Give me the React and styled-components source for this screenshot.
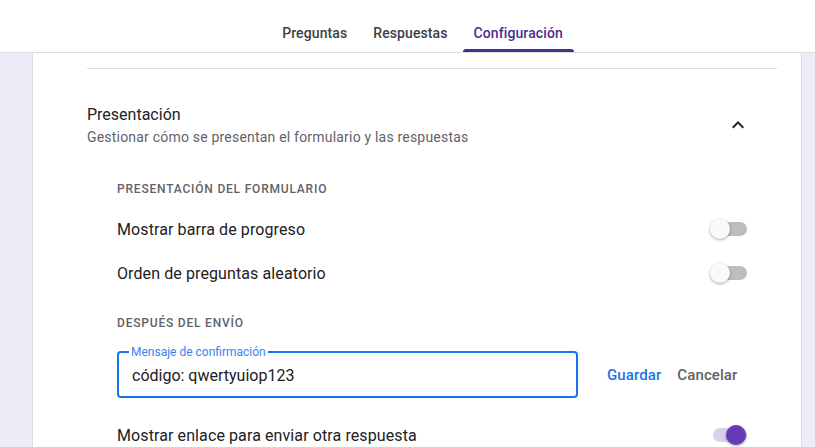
import React from "react";
import styled, { createGlobalStyle } from "styled-components";

const GlobalStyle = createGlobalStyle`
  html, body {
    margin: 0;
    padding: 0;
    background: #f0ebf8;
    font-family: Roboto, "Liberation Sans", Arial, sans-serif;
    color: #202124;
    overflow: hidden;
  }
`

const Header = styled.header`
  height: 52px;
  background: #fff;
  border-bottom: 1px solid #dadce0;
  display: flex;
  justify-content: center;
  align-items: flex-end;
  padding-left: 30px;
  box-sizing: content-box;
`

const Tabs = styled.nav`
  display: flex;
  gap: 4px;
`

const Tab = styled.div`
  position: relative;
  height: 52px;
  box-sizing: border-box;
  padding: 0 11px 9px;
  display: flex;
  align-items: flex-end;
  font-size: 14px;
  line-height: 20px;
  font-weight: 500;
  letter-spacing: 0.1px;
  color: ${p => (p.$active ? "#4b2c8f" : "#3c4043")};
  cursor: pointer;

  &::after {
    content: "";
    display: ${p => (p.$active ? "block" : "none")};
    position: absolute;
    left: 0;
    right: 0;
    bottom: 0;
    height: 3px;
    border-radius: 3px 3px 0 0;
    background: #4b2c8f;
  }
`

const Card = styled.main`
  margin-left: 32px;
  width: 770px;
  min-height: 400px;
  background: #fff;
  border-left: 1px solid #dadce0;
  border-right: 1px solid #dadce0;
  box-sizing: border-box;
  padding: 15px 24px 0 54px;
`

const Divider = styled.div`
  height: 1px;
  background: #dadce0;
`

const SectionHead = styled.div`
  margin-top: 34px;
  display: flex;
  align-items: center;
  justify-content: space-between;
  padding-right: 27px;
`

const Title = styled.h2`
  margin: 0;
  font-size: 16px;
  font-weight: 400;
  line-height: 24px;
  color: #202124;
`

const Subtitle = styled.p`
  margin: 0;
  font-size: 14px;
  line-height: 20px;
  letter-spacing: 0.2px;
  color: #5f6368;
`

const Chevron = styled.svg`
  width: 24px;
  height: 24px;
  fill: #202124;
`

const Body = styled.div`
  padding: 0 30px;
`

const GroupLabel = styled.div`
  margin-top: ${p => p.$top}px;
  font-size: 12px;
  font-weight: 500;
  line-height: 20px;
  letter-spacing: 0.8px;
  text-transform: uppercase;
  color: #5f6368;
`

const Row = styled.div`
  height: 44px;
  display: flex;
  align-items: center;
  justify-content: space-between;
  font-size: 16px;
  letter-spacing: 0.1px;
  color: #202124;
  margin-top: ${p => p.$top || 0}px;
`

const Track = styled.div`
  position: relative;
  width: 34px;
  height: 14px;
  border-radius: 7px;
  background: ${p => (p.$on ? "#d9d0ee" : "#bdbdbd")};
`

const Thumb = styled.div`
  position: absolute;
  top: -3px;
  left: ${p => (p.$on ? "13px" : "-3px")};
  width: 20px;
  height: 20px;
  border-radius: 50%;
  background: ${p => (p.$on ? "#673ab7" : "#fafafa")};
  box-shadow: 0 1px 3px rgba(0, 0, 0, 0.35);
`

const Toggle = ({ on }) => (
  <Track $on={on}>
    <Thumb $on={on} />
  </Track>
)

const EditLine = styled.div`
  margin-top: 12px;
  display: flex;
  align-items: flex-end;
`

const Field = styled.fieldset`
  margin: 0;
  width: 461px;
  height: 53px;
  box-sizing: border-box;
  border: 2px solid #1a73e8;
  border-radius: 4px;
  padding: 0 13px;
  display: flex;
  align-items: center;

  legend {
    margin-left: -3px;
    padding: 0 2px;
    font-size: 12px;
    line-height: 14px;
    color: #3b82f0;
  }
`

const FieldValue = styled.div`
  font-size: 16px;
  color: #202124;
  margin-top: -5px;
`

const Actions = styled.div`
  display: flex;
  margin-left: 21px;
  height: 46px;
  align-items: center;
`

const TextButton = styled.button`
  border: none;
  background: none;
  padding: 0 8px;
  height: 36px;
  font-family: inherit;
  font-size: 15px;
  font-weight: 500;
  letter-spacing: 0.1px;
  color: ${p => (p.$primary ? "#1a73e8" : "#5f6368")};
  cursor: pointer;
`

export default function App() {
  return (
    <>
      <GlobalStyle />
      <Header>
        <Tabs>
          <Tab>Preguntas</Tab>
          <Tab>Respuestas</Tab>
          <Tab $active>Configuración</Tab>
        </Tabs>
      </Header>
      <Card>
        <Divider />
        <SectionHead>
          <div>
            <Title>Presentación</Title>
            <Subtitle>Gestionar cómo se presentan el formulario y las respuestas</Subtitle>
          </div>
          <Chevron viewBox="0 0 24 24">
            <path d="M12 8l-6 6 1.41 1.41L12 10.83l4.59 4.58L18 14z" />
          </Chevron>
        </SectionHead>
        <Body>
          <GroupLabel $top={32}>Presentación del formulario</GroupLabel>
          <Row $top={8}>
            Mostrar barra de progreso
            <Toggle />
          </Row>
          <Row>
            Orden de preguntas aleatorio
            <Toggle />
          </Row>
          <GroupLabel $top={18}>Después del envío</GroupLabel>
          <EditLine>
            <Field>
              <legend>Mensaje de confirmación</legend>
              <FieldValue>código: qwertyuiop123</FieldValue>
            </Field>
            <Actions>
              <TextButton $primary>Guardar</TextButton>
              <TextButton>Cancelar</TextButton>
            </Actions>
          </EditLine>
          <Row $top={15}>
            Mostrar enlace para enviar otra respuesta
            <Toggle on />
          </Row>
        </Body>
      </Card>
    </>
  );
}
